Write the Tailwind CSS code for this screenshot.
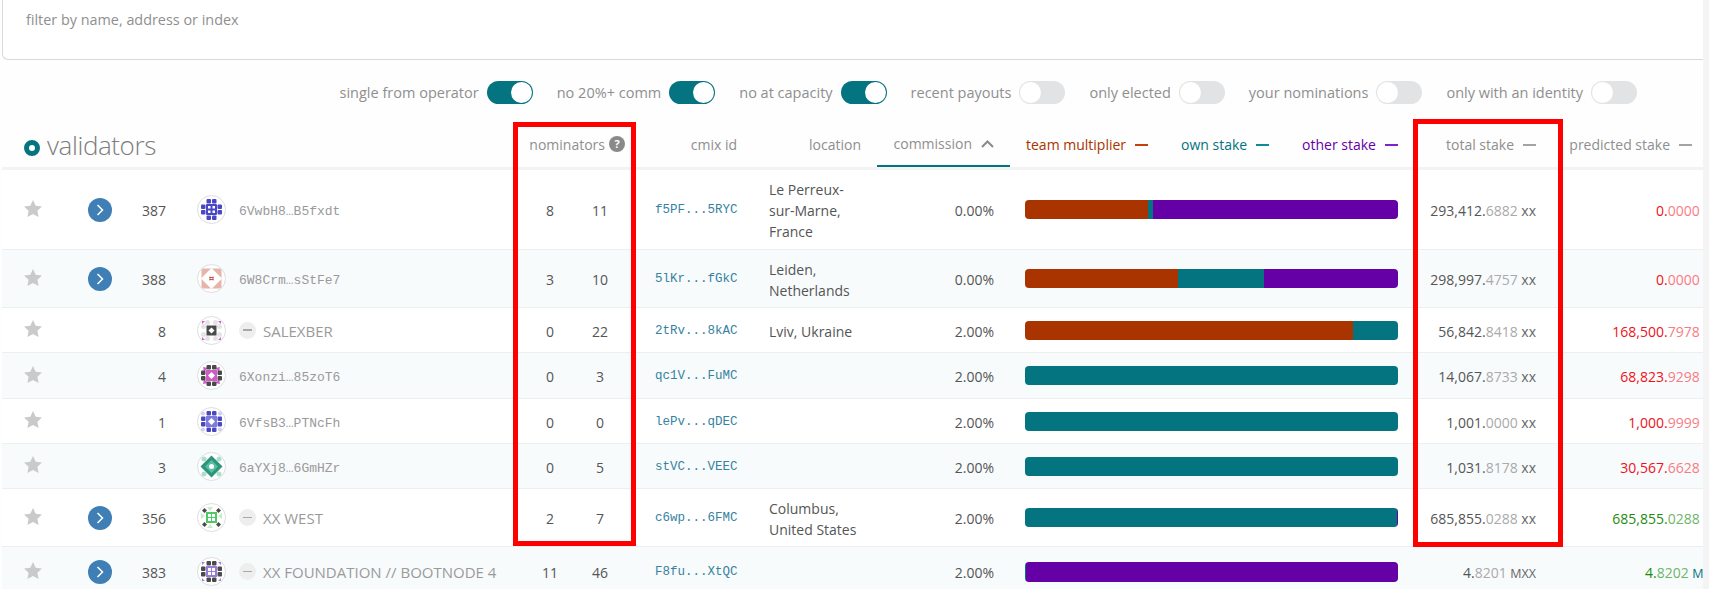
<!DOCTYPE html>
<html lang="en">
<head>
    <meta charset="UTF-8">
    <title>validators</title>
    <script src="https://cdn.jsdelivr.net/npm/@tailwindcss/browser@4"></script>
</head>
<body class="bg-[#f4f4f4] overflow-hidden font-['Open_Sans',sans-serif] text-[14px] text-[#555]">
<div class="relative h-[589px] w-[1709px] overflow-hidden">
    <div class="w-[1703px] h-[589px] bg-[#fefefe] overflow-hidden">
        <!-- filter -->
        <div class="ml-[2px] h-[60px] pl-[23px] pt-[9px] bg-white border-b border-l border-[#d9d9d9] rounded-bl-md text-[14.400px] text-[#8f8f8f]">filter by name, address or index</div>

        <!-- toggles -->
        <div class="mt-[21px] h-[23px] flex justify-end items-center gap-[24px] pr-[66px] text-[14.500px] text-[#8f8f8f]">
            <label class="flex items-center gap-[8px]">single from operator <span class="w-[46px] h-[23px] rounded-full bg-[#047481] flex justify-end items-center p-[1px]"><span class="w-[21px] h-[21px] rounded-full bg-white"></span></span></label>
            <label class="flex items-center gap-[8px]">no 20%+ comm <span class="w-[46px] h-[23px] rounded-full bg-[#047481] flex justify-end items-center p-[1px]"><span class="w-[21px] h-[21px] rounded-full bg-white"></span></span></label>
            <label class="flex items-center gap-[8px]">no at capacity <span class="w-[46px] h-[23px] rounded-full bg-[#047481] flex justify-end items-center p-[1px]"><span class="w-[21px] h-[21px] rounded-full bg-white"></span></span></label>
            <label class="flex items-center gap-[8px]">recent payouts <span class="w-[46px] h-[23px] rounded-full bg-[#e2e3e5] flex items-center p-[1px]"><span class="w-[21px] h-[21px] rounded-full bg-white"></span></span></label>
            <label class="flex items-center gap-[8px]">only elected <span class="w-[46px] h-[23px] rounded-full bg-[#e2e3e5] flex items-center p-[1px]"><span class="w-[21px] h-[21px] rounded-full bg-white"></span></span></label>
            <label class="flex items-center gap-[8px]">your nominations <span class="w-[46px] h-[23px] rounded-full bg-[#e2e3e5] flex items-center p-[1px]"><span class="w-[21px] h-[21px] rounded-full bg-white"></span></span></label>
            <label class="flex items-center gap-[8px]">only with an identity <span class="w-[46px] h-[23px] rounded-full bg-[#e2e3e5] flex items-center p-[1px]"><span class="w-[21px] h-[21px] rounded-full bg-white"></span></span></label>
        </div>

        <!-- table header -->
        <div class="ml-[2px] h-[66px] border-b-[3px] border-[#f3f3f3] grid grid-cols-[60px_68px_36px_359px_50px_50px_144px_108px_133px_388px_138px_182px] text-[#8f8f8f]">
            <div class="col-span-4 flex items-end pl-[22px] pb-[4px] gap-[7px]">
                <span class="w-[16px] h-[16px] rounded-full border-[5px] border-[#047481] mb-[7px]"></span>
                <h1 class="text-[26px] font-light leading-[36px] tracking-[-0.4px] text-[#7d7d7d]">validators</h1>
            </div>
            <div class="col-span-2 flex items-end justify-end pb-[12px] gap-[4px]">nominators <span class="w-[16px] h-[16px] rounded-full bg-[#8a8a8a] text-white text-[11px] font-bold leading-[16px] text-center mb-[3px]">?</span></div>
            <div class="flex items-end justify-end pb-[12px] pr-[32px]">cmix id</div>
            <div class="flex items-end justify-end pb-[12px] pr-[16px]">location</div>
            <div class="flex items-end justify-end pb-[11px] pr-[16px] gap-[9px] border-b-2 border-[#047481]">commission
                <svg class="mb-[6px]" width="13" height="8" viewBox="0 0 13 8" fill="none" stroke="#8a8a8a" stroke-width="2"><path d="M1 7l5.500-5.500L12 7"/></svg>
            </div>
            <div class="flex items-end justify-between pb-[12px] pl-[16px]">
                <span class="flex items-center gap-[9px] text-[#a93400]">team multiplier <span class="w-[13px] h-[2px] bg-[#c2410c]"></span></span>
                <span class="flex items-center gap-[9px] text-[#047481]">own stake <span class="w-[13px] h-[2px] bg-[#0f8a98]"></span></span>
                <span class="flex items-center gap-[9px] text-[#6500a6]">other stake <span class="w-[13px] h-[2px] bg-[#7e22ce]"></span></span>
            </div>
            <div class="flex items-end justify-end pb-[12px]"><span class="flex items-center gap-[9px]">total stake <span class="w-[13px] h-[2px] bg-[#a3a3a3]"></span></span></div>
            <div class="flex items-end justify-end pb-[12px] pr-[26px]"><span class="flex items-center gap-[9px]">predicted stake <span class="w-[13px] h-[2px] bg-[#a3a3a3]"></span></span></div>
        </div>

        <!-- rows -->
        <div class="ml-[2px] h-[80px] border-b border-[#eceef0] bg-white grid grid-cols-[60px_68px_36px_359px_50px_50px_144px_108px_133px_388px_138px_182px] items-center [&>span]:mt-[2px]">
            <svg class="ml-[22px] mb-[3px]" width="18" height="17" viewBox="0 0 18 17" fill="#c9cacb"><path d="M9 0l2.700 5.700 6.300.8-4.600 4.300 1.200 6.200L9 14l-5.600 3 1.200-6.200L0 6.500l6.300-.8z"/></svg>
            <div class="ml-[26px] w-[24px] h-[24px] rounded-full bg-[#3f7fb6] flex items-center justify-center"><svg width="8" height="12" viewBox="0 0 8 12" fill="none" stroke="white" stroke-width="1.500"><path d="M1.500 1l5 5-5 5"/></svg></div>
            <span class="text-right">387</span>
            <div class="pl-[31px] flex items-center gap-[13px]">
                <svg width="29" height="29" viewBox="0 0 29 29"><circle cx="14.500" cy="14.500" r="14" fill="white" stroke="#ddd"/><g fill="#4a47c4"><rect x="9.500" y="4" width="4.500" height="4.500" rx="1"/><rect x="15" y="4" width="4.500" height="4.500" rx="1"/><rect x="9.500" y="20.500" width="4.500" height="4.500" rx="1"/><rect x="15" y="20.500" width="4.500" height="4.500" rx="1"/><rect x="4" y="9.500" width="4.500" height="4.500" rx="1"/><rect x="4" y="15" width="4.500" height="4.500" rx="1"/><rect x="20.500" y="9.500" width="4.500" height="4.500" rx="1"/><rect x="20.500" y="15" width="4.500" height="4.500" rx="1"/><rect x="9" y="9" width="11" height="11" rx="1"/></g><g fill="white"><rect x="11" y="11" width="2.500" height="2.500"/><rect x="15.500" y="11" width="2.500" height="2.500"/><rect x="11" y="15.500" width="2.500" height="2.500"/><rect x="15.500" y="15.500" width="2.500" height="2.500"/></g></svg>
                <span class="mt-[5px] font-['Liberation_Mono',monospace] text-[13px] text-[#9a9a9a]">6VwbH8<span class="font-['Open_Sans'] text-[10px]">…</span>B5fxdt</span>
            </div>
            <span class="text-center">8</span>
            <span class="text-center">11</span>
            <span class="pl-[30px] font-['Liberation_Mono',monospace] text-[12.500px] text-[#36829f]">f5PF...5RYC</span>
            <span class="leading-[21px]">Le Perreux-<br>sur-Marne,<br>France</span>
            <span class="text-right pr-[16px]">0.00%</span>
            <div class="pl-[15px]"><div class="h-[19px] rounded-[4px] overflow-hidden flex"><div class="bg-[#a93400] w-[123px]"></div><div class="bg-[#047481] w-[5px]"></div><div class="bg-[#6500a6] flex-1"></div></div></div>
            <span class="text-right">293,412.<span class="text-[#aaa]">6882</span> <span class="text-[#666]">xx</span></span>
            <span class="text-right text-[#f01020]">0.<span class="text-[#f87c84]">0000</span> <span class="text-[#666]">xx</span></span>
        </div>

        <div class="ml-[2px] h-[58px] border-b border-[#eceef0] bg-[#f8fbfc] grid grid-cols-[60px_68px_36px_359px_50px_50px_144px_108px_133px_388px_138px_182px] items-center [&>span]:mt-[2px]">
            <svg class="ml-[22px] mb-[3px]" width="18" height="17" viewBox="0 0 18 17" fill="#c9cacb"><path d="M9 0l2.700 5.700 6.300.8-4.600 4.300 1.200 6.200L9 14l-5.600 3 1.200-6.200L0 6.500l6.300-.8z"/></svg>
            <div class="ml-[26px] w-[24px] h-[24px] rounded-full bg-[#3f7fb6] flex items-center justify-center"><svg width="8" height="12" viewBox="0 0 8 12" fill="none" stroke="white" stroke-width="1.500"><path d="M1.500 1l5 5-5 5"/></svg></div>
            <span class="text-right">388</span>
            <div class="pl-[31px] flex items-center gap-[13px]">
                <svg width="29" height="29" viewBox="0 0 29 29"><circle cx="14.500" cy="14.500" r="14" fill="white" stroke="#ddd"/><rect x="4.500" y="4.500" width="20" height="20" rx="2" fill="#e6b5aa"/><path d="M14.500 4l10.500 10.500L14.500 25 4 14.500z" fill="white"/><g stroke="#c0584a" stroke-width="1"><path d="M13 12.500v4M16 12.500v4M12.500 13.500h4M12.500 15.500h4"/></g></svg>
                <span class="mt-[5px] font-['Liberation_Mono',monospace] text-[13px] text-[#9a9a9a]">6W8Crm<span class="font-['Open_Sans'] text-[10px]">…</span>sStFe7</span>
            </div>
            <span class="text-center">3</span>
            <span class="text-center">10</span>
            <span class="pl-[30px] font-['Liberation_Mono',monospace] text-[12.500px] text-[#36829f]">5lKr...fGkC</span>
            <span class="leading-[21px]">Leiden,<br>Netherlands</span>
            <span class="text-right pr-[16px]">0.00%</span>
            <div class="pl-[15px]"><div class="h-[19px] rounded-[4px] overflow-hidden flex"><div class="bg-[#a93400] w-[153px]"></div><div class="bg-[#047481] w-[86px]"></div><div class="bg-[#6500a6] flex-1"></div></div></div>
            <span class="text-right">298,997.<span class="text-[#aaa]">4757</span> <span class="text-[#666]">xx</span></span>
            <span class="text-right text-[#f01020]">0.<span class="text-[#f87c84]">0000</span> <span class="text-[#666]">xx</span></span>
        </div>

        <div class="ml-[2px] h-[45px] border-b border-[#eceef0] bg-white grid grid-cols-[60px_68px_36px_359px_50px_50px_144px_108px_133px_388px_138px_182px] items-center [&>span]:mt-[2px]">
            <svg class="ml-[22px] mb-[3px]" width="18" height="17" viewBox="0 0 18 17" fill="#c9cacb"><path d="M9 0l2.700 5.700 6.300.8-4.600 4.300 1.200 6.200L9 14l-5.600 3 1.200-6.200L0 6.500l6.300-.8z"/></svg>
            <span></span>
            <span class="text-right">8</span>
            <div class="pl-[31px] flex items-center gap-[13px]">
                <svg width="29" height="29" viewBox="0 0 29 29"><circle cx="14.500" cy="14.500" r="14" fill="white" stroke="#ddd"/><g fill="#e4e4e4"><circle cx="10.500" cy="6.500" r="2.500"/><circle cx="18.500" cy="6.500" r="2.500"/><circle cx="6.500" cy="10.500" r="2.500"/><circle cx="22.500" cy="10.500" r="2.500"/><circle cx="6.500" cy="18.500" r="2.500"/><circle cx="22.500" cy="18.500" r="2.500"/><circle cx="10.500" cy="22.500" r="2.500"/><circle cx="18.500" cy="22.500" r="2.500"/></g><g fill="#d25cc8"><path d="M5 5l3 0-3 3zM24 5l-3 0 3 3zM5 24l3 0-3-3zM24 24l-3 0 3-3z"/></g><rect x="9.500" y="9.500" width="10" height="10" fill="#4a4a4a"/><path d="M14.500 11.500l3 3-3 3-3-3z" fill="white"/></svg>
                <span class="w-[17px] h-[17px] rounded-full bg-[#eeeeee] flex items-center justify-center"><span class="w-[9px] h-[1.500px] bg-[#a8a8a8]"></span></span>
                <span class="-ml-[6px] mt-[2px] text-[15px] text-[#9a9a9a]">SALEXBER</span>
            </div>
            <span class="text-center">0</span>
            <span class="text-center">22</span>
            <span class="pl-[30px] font-['Liberation_Mono',monospace] text-[12.500px] text-[#36829f]">2tRv...8kAC</span>
            <span>Lviv, Ukraine</span>
            <span class="text-right pr-[16px]">2.00%</span>
            <div class="pl-[15px]"><div class="h-[19px] rounded-[4px] overflow-hidden flex"><div class="bg-[#a93400] w-[328px]"></div><div class="bg-[#047481] flex-1"></div></div></div>
            <span class="text-right">56,842.<span class="text-[#aaa]">8418</span> <span class="text-[#666]">xx</span></span>
            <span class="text-right text-[#f01020]">168,500.<span class="text-[#f87c84]">7978</span> <span class="text-[#666]">xx</span></span>
        </div>

        <div class="ml-[2px] h-[46px] border-b border-[#eceef0] bg-[#f8fbfc] grid grid-cols-[60px_68px_36px_359px_50px_50px_144px_108px_133px_388px_138px_182px] items-center [&>span]:mt-[2px]">
            <svg class="ml-[22px] mb-[3px]" width="18" height="17" viewBox="0 0 18 17" fill="#c9cacb"><path d="M9 0l2.700 5.700 6.300.8-4.600 4.300 1.200 6.200L9 14l-5.600 3 1.200-6.200L0 6.500l6.300-.8z"/></svg>
            <span></span>
            <span class="text-right">4</span>
            <div class="pl-[31px] flex items-center gap-[13px]">
                <svg width="29" height="29" viewBox="0 0 29 29"><circle cx="14.500" cy="14.500" r="14" fill="white" stroke="#ddd"/><g fill="#d25cc8"><path d="M6 6l5 1-4 4zM23 6l-5 1 4 4zM6 23l5-1-4-4zM23 23l-5-1 4-4z"/></g><g fill="#4a4a4a"><rect x="9.500" y="4" width="4.500" height="4.500" rx="1"/><rect x="15" y="4" width="4.500" height="4.500" rx="1"/><rect x="9.500" y="20.500" width="4.500" height="4.500" rx="1"/><rect x="15" y="20.500" width="4.500" height="4.500" rx="1"/><rect x="4" y="9.500" width="4.500" height="4.500" rx="1"/><rect x="4" y="15" width="4.500" height="4.500" rx="1"/><rect x="20.500" y="9.500" width="4.500" height="4.500" rx="1"/><rect x="20.500" y="15" width="4.500" height="4.500" rx="1"/></g><rect x="9" y="9" width="11" height="11" fill="#cf5cc4"/><path d="M14.500 11l3.500 3.500-3.500 3.500-3.500-3.500z" fill="white"/></svg>
                <span class="mt-[5px] font-['Liberation_Mono',monospace] text-[13px] text-[#9a9a9a]">6Xonzi<span class="font-['Open_Sans'] text-[10px]">…</span>85zoT6</span>
            </div>
            <span class="text-center">0</span>
            <span class="text-center">3</span>
            <span class="pl-[30px] font-['Liberation_Mono',monospace] text-[12.500px] text-[#36829f]">qc1V...FuMC</span>
            <span></span>
            <span class="text-right pr-[16px]">2.00%</span>
            <div class="pl-[15px]"><div class="h-[19px] rounded-[4px] bg-[#047481]"></div></div>
            <span class="text-right">14,067.<span class="text-[#aaa]">8733</span> <span class="text-[#666]">xx</span></span>
            <span class="text-right text-[#f01020]">68,823.<span class="text-[#f87c84]">9298</span> <span class="text-[#666]">xx</span></span>
        </div>

        <div class="ml-[2px] h-[45px] border-b border-[#eceef0] bg-white grid grid-cols-[60px_68px_36px_359px_50px_50px_144px_108px_133px_388px_138px_182px] items-center [&>span]:mt-[2px]">
            <svg class="ml-[22px] mb-[3px]" width="18" height="17" viewBox="0 0 18 17" fill="#c9cacb"><path d="M9 0l2.700 5.700 6.300.8-4.600 4.300 1.200 6.200L9 14l-5.600 3 1.200-6.200L0 6.500l6.300-.8z"/></svg>
            <span></span>
            <span class="text-right">1</span>
            <div class="pl-[31px] flex items-center gap-[13px]">
                <svg width="29" height="29" viewBox="0 0 29 29"><circle cx="14.500" cy="14.500" r="14" fill="white" stroke="#ddd"/><g fill="#cfcdf2"><circle cx="6" cy="6.500" r="2"/><circle cx="23" cy="6.500" r="2"/><circle cx="6" cy="22.500" r="2"/><circle cx="23" cy="22.500" r="2"/></g><g fill="#4a47c4"><rect x="9.500" y="4" width="4.500" height="4.500" rx="1"/><rect x="15" y="4" width="4.500" height="4.500" rx="1"/><rect x="9.500" y="20.500" width="4.500" height="4.500" rx="1"/><rect x="15" y="20.500" width="4.500" height="4.500" rx="1"/><rect x="4" y="9.500" width="4.500" height="4.500" rx="1"/><rect x="4" y="15" width="4.500" height="4.500" rx="1"/><rect x="20.500" y="9.500" width="4.500" height="4.500" rx="1"/><rect x="20.500" y="15" width="4.500" height="4.500" rx="1"/></g><rect x="9" y="9" width="11" height="11" fill="#7f7bd8"/><path d="M14.500 11l3.500 3.500-3.500 3.500-3.500-3.500z" fill="white"/></svg>
                <span class="mt-[5px] font-['Liberation_Mono',monospace] text-[13px] text-[#9a9a9a]">6VfsB3<span class="font-['Open_Sans'] text-[10px]">…</span>PTNcFh</span>
            </div>
            <span class="text-center">0</span>
            <span class="text-center">0</span>
            <span class="pl-[30px] font-['Liberation_Mono',monospace] text-[12.500px] text-[#36829f]">lePv...qDEC</span>
            <span></span>
            <span class="text-right pr-[16px]">2.00%</span>
            <div class="pl-[15px]"><div class="h-[19px] rounded-[4px] bg-[#047481]"></div></div>
            <span class="text-right">1,001.<span class="text-[#aaa]">0000</span> <span class="text-[#666]">xx</span></span>
            <span class="text-right text-[#f01020]">1,000.<span class="text-[#f87c84]">9999</span> <span class="text-[#666]">xx</span></span>
        </div>

        <div class="ml-[2px] h-[45px] border-b border-[#eceef0] bg-[#f8fbfc] grid grid-cols-[60px_68px_36px_359px_50px_50px_144px_108px_133px_388px_138px_182px] items-center [&>span]:mt-[2px]">
            <svg class="ml-[22px] mb-[3px]" width="18" height="17" viewBox="0 0 18 17" fill="#c9cacb"><path d="M9 0l2.700 5.700 6.300.8-4.600 4.300 1.200 6.200L9 14l-5.600 3 1.200-6.200L0 6.500l6.300-.8z"/></svg>
            <span></span>
            <span class="text-right">3</span>
            <div class="pl-[31px] flex items-center gap-[13px]">
                <svg width="29" height="29" viewBox="0 0 29 29"><circle cx="14.500" cy="14.500" r="14" fill="white" stroke="#ddd"/><g fill="#a8e0cf"><circle cx="7" cy="7" r="2.500"/><circle cx="22" cy="7" r="2.500"/><circle cx="7" cy="22" r="2.500"/><circle cx="22" cy="22" r="2.500"/></g><path d="M14.500 3.500l11 11-11 11-11-11z" fill="#2f9479"/><path d="M14.500 8l6.500 6.500-6.500 6.500-6.500-6.500z" fill="#58bfa2"/><circle cx="14.500" cy="14.500" r="2.500" fill="white"/></svg>
                <span class="mt-[5px] font-['Liberation_Mono',monospace] text-[13px] text-[#9a9a9a]">6aYXj8<span class="font-['Open_Sans'] text-[10px]">…</span>6GmHZr</span>
            </div>
            <span class="text-center">0</span>
            <span class="text-center">5</span>
            <span class="pl-[30px] font-['Liberation_Mono',monospace] text-[12.500px] text-[#36829f]">stVC...VEEC</span>
            <span></span>
            <span class="text-right pr-[16px]">2.00%</span>
            <div class="pl-[15px]"><div class="h-[19px] rounded-[4px] bg-[#047481]"></div></div>
            <span class="text-right">1,031.<span class="text-[#aaa]">8178</span> <span class="text-[#666]">xx</span></span>
            <span class="text-right text-[#f01020]">30,567.<span class="text-[#f87c84]">6628</span> <span class="text-[#666]">xx</span></span>
        </div>

        <div class="ml-[2px] h-[58px] border-b border-[#eceef0] bg-white grid grid-cols-[60px_68px_36px_359px_50px_50px_144px_108px_133px_388px_138px_182px] items-center [&>span]:mt-[2px]">
            <svg class="ml-[22px] mb-[3px]" width="18" height="17" viewBox="0 0 18 17" fill="#c9cacb"><path d="M9 0l2.700 5.700 6.300.8-4.600 4.300 1.200 6.200L9 14l-5.600 3 1.200-6.200L0 6.500l6.300-.8z"/></svg>
            <div class="ml-[26px] w-[24px] h-[24px] rounded-full bg-[#3f7fb6] flex items-center justify-center"><svg width="8" height="12" viewBox="0 0 8 12" fill="none" stroke="white" stroke-width="1.500"><path d="M1.500 1l5 5-5 5"/></svg></div>
            <span class="text-right">356</span>
            <div class="pl-[31px] flex items-center gap-[13px]">
                <svg width="29" height="29" viewBox="0 0 29 29"><circle cx="14.500" cy="14.500" r="14" fill="white" stroke="#ddd"/><g fill="#c6eccb"><path d="M4 10l4 3-4 3zM25 10l-4 3 4 3zM10 4l3 4 3-4zM10 25l3-4 3 4z"/></g><g fill="#4a4a4a"><path d="M7.500 5l2.500 2.500-2.500 2.500L5 7.500zM21.500 5L24 7.500 21.500 10 19 7.500zM7.500 19l2.500 2.500L7.500 24 5 21.500zM21.500 19l2.500 2.500-2.500 2.500-2.500-2.500z"/></g><rect x="9" y="9" width="11" height="11" fill="#4fc765"/><g fill="white"><rect x="11" y="11" width="3" height="3"/><rect x="15" y="11" width="3" height="3"/><rect x="11" y="15" width="3" height="3"/><rect x="15" y="15" width="3" height="3"/></g></svg>
                <span class="w-[17px] h-[17px] rounded-full bg-[#eeeeee] flex items-center justify-center"><span class="w-[9px] h-[1.500px] bg-[#a8a8a8]"></span></span>
                <span class="-ml-[6px] mt-[2px] text-[15px] text-[#9a9a9a]">XX WEST</span>
            </div>
            <span class="text-center">2</span>
            <span class="text-center">7</span>
            <span class="pl-[30px] font-['Liberation_Mono',monospace] text-[12.500px] text-[#36829f]">c6wp...6FMC</span>
            <span class="leading-[21px]">Columbus,<br>United States</span>
            <span class="text-right pr-[16px]">2.00%</span>
            <div class="pl-[15px]"><div class="h-[19px] rounded-[4px] overflow-hidden flex"><div class="bg-[#047481] flex-1"></div><div class="bg-[#6500a6] w-[1px]"></div></div></div>
            <span class="text-right">685,855.<span class="text-[#aaa]">0288</span> <span class="text-[#666]">xx</span></span>
            <span class="text-right text-[#1f8a10]">685,855.<span class="text-[#6fb56a]">0288</span> <span class="text-[#666]">xx</span></span>
        </div>

        <div class="ml-[2px] h-[50px] border-b border-[#eceef0] bg-[#f8fbfc] grid grid-cols-[60px_68px_36px_359px_50px_50px_144px_108px_133px_388px_138px_182px] items-center [&>span]:mt-[2px]">
            <svg class="ml-[22px] mb-[3px]" width="18" height="17" viewBox="0 0 18 17" fill="#c9cacb"><path d="M9 0l2.700 5.700 6.300.8-4.600 4.300 1.200 6.200L9 14l-5.600 3 1.200-6.200L0 6.500l6.300-.8z"/></svg>
            <div class="ml-[26px] w-[24px] h-[24px] rounded-full bg-[#3f7fb6] flex items-center justify-center"><svg width="8" height="12" viewBox="0 0 8 12" fill="none" stroke="white" stroke-width="1.500"><path d="M1.500 1l5 5-5 5"/></svg></div>
            <span class="text-right">383</span>
            <div class="pl-[31px] flex items-center gap-[13px]">
                <svg width="29" height="29" viewBox="0 0 29 29"><circle cx="14.500" cy="14.500" r="14" fill="white" stroke="#ddd"/><g fill="#a47be0"><path d="M5 5l3 0-3 3zM24 5l-3 0 3 3zM5 24l3 0-3-3zM24 24l-3 0 3-3z"/></g><g fill="#4a4a4a"><rect x="9.500" y="4" width="4.500" height="4.500" rx="1"/><rect x="15" y="4" width="4.500" height="4.500" rx="1"/><rect x="9.500" y="20.500" width="4.500" height="4.500" rx="1"/><rect x="15" y="20.500" width="4.500" height="4.500" rx="1"/><rect x="4" y="9.500" width="4.500" height="4.500" rx="1"/><rect x="4" y="15" width="4.500" height="4.500" rx="1"/><rect x="20.500" y="9.500" width="4.500" height="4.500" rx="1"/><rect x="20.500" y="15" width="4.500" height="4.500" rx="1"/></g><rect x="9" y="9" width="11" height="11" fill="#9a7bd8"/><g fill="white"><rect x="11" y="11" width="3" height="3"/><rect x="15" y="11" width="3" height="3"/><rect x="11" y="15" width="3" height="3"/><rect x="15" y="15" width="3" height="3"/></g></svg>
                <span class="w-[17px] h-[17px] rounded-full bg-[#eeeeee] flex items-center justify-center"><span class="w-[9px] h-[1.500px] bg-[#a8a8a8]"></span></span>
                <span class="-ml-[6px] mt-[2px] text-[15px] text-[#9a9a9a]">XX FOUNDATION // BOOTNODE 4</span>
            </div>
            <span class="text-center">11</span>
            <span class="text-center">46</span>
            <span class="pl-[30px] font-['Liberation_Mono',monospace] text-[12.500px] text-[#36829f]">F8fu...XtQC</span>
            <span></span>
            <span class="text-right pr-[16px]">2.00%</span>
            <div class="pl-[15px]"><div class="h-[20px] rounded-[4px] overflow-hidden flex"><div class="bg-[#047481] w-[1px]"></div><div class="bg-[#6500a6] flex-1"></div></div></div>
            <span class="text-right">4.<span class="text-[#aaa]">8201</span> <span class="text-[12.500px] text-[#666]">MXX</span></span>
            <span class="text-right text-[#1f8a10]">4.<span class="text-[#6fb56a]">8202</span> <span class="text-[12.500px] text-[#047481]">MXX</span></span>
        </div>
    </div>

    <!-- red annotation boxes over the table -->
    <div class="absolute left-[513px] top-[122px] w-[123px] h-[424px] border-[5px] border-[#ff0000]"></div>
    <div class="absolute left-[1413px] top-[119px] w-[150px] h-[428px] border-[5px] border-[#ff0000]"></div>
</div>
</body>
</html>
